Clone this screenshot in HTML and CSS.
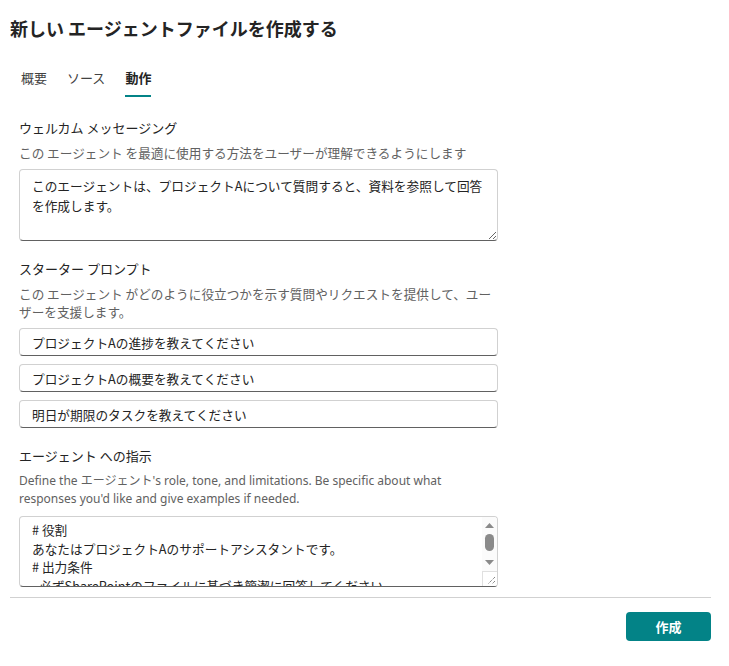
FILE: index.html
```html
<!DOCTYPE html>
<html lang="ja">
<head>
<meta charset="utf-8">
<title>新しい エージェントファイルを作成する</title>
<link rel="stylesheet" href="styles.css">
</head>
<body>
<div class="dialog">
  <h1 class="title">新しい エージェントファイルを作成する</h1>
  <nav class="tabs">
    <span class="tab">概要</span>
    <span class="tab">ソース</span>
    <span class="tab active">動作</span>
  </nav>
  <div class="form">
    <section class="field">
      <div class="label">ウェルカム メッセージング</div>
      <div class="desc">この エージェント を最適に使用する方法をユーザーが理解できるようにします</div>
      <textarea class="textarea welcome">このエージェントは、プロジェクトAについて質問すると、資料を参照して回答を作成します。</textarea>
    </section>
    <section class="field">
      <div class="label">スターター プロンプト</div>
      <div class="desc">この エージェント がどのように役立つかを示す質問やリクエストを提供して、ユーザーを支援します。</div>
      <div class="prompts">
        <input class="input" type="text" value="プロジェクトAの進捗を教えてください">
        <input class="input" type="text" value="プロジェクトAの概要を教えてください">
        <input class="input" type="text" value="明日が期限のタスクを教えてください">
      </div>
    </section>
    <section class="field">
      <div class="label">エージェント への指示</div>
      <div class="desc latin">Define the エージェント's role, tone, and limitations. Be specific about what responses you'd like and give examples if needed.</div>
      <div class="scrollbox">
        <div class="scroll-content">
          <div># 役割</div>
          <div>あなたはプロジェクトAのサポートアシスタントです。</div>
          <div># 出力条件</div>
          <div>- 必ずSharePointのファイルに基づき簡潔に回答してください</div>
        </div>
        <div class="scrollbar">
          <svg class="arrow" width="15" height="12" viewBox="0 0 15 12"><path d="M3 9 L7.5 4 L12 9 Z" fill="#8a8a8a"/></svg>
          <div class="thumb"></div>
          <div class="track"></div>
          <svg class="arrow" width="15" height="12" viewBox="0 0 15 12"><path d="M3 3 L7.5 8 L12 3 Z" fill="#8a8a8a"/></svg>
          <div class="grip">
            <svg width="15" height="15" viewBox="0 0 15 15"><path d="M12 5 L5 12 M12 9 L9 12" stroke="#555" stroke-width="1" stroke-dasharray="1 1"/></svg>
          </div>
        </div>
      </div>
    </section>
  </div>
  <div class="footer">
    <button class="primary">作成</button>
  </div>
</div>
</body>
</html>
```
FILE: styles.css
```css
* { box-sizing: border-box; }
html, body { margin: 0; padding: 0; background: #ffffff; }
body {
  font-family: "Noto Sans", "Noto Sans CJK JP", sans-serif;
  color: #242424;
  font-size: 13px;
}
.dialog {
  padding: 16px 18px 0 10px;
}
.title {
  margin: 0;
  font-size: 18px;
  line-height: 24px;
  font-weight: 700;
  color: #242424;
  font-family: "Noto Sans CJK JP", sans-serif;
}
.tabs {
  display: flex;
  margin-top: 28px;
  padding-left: 1px;
}
.tab {
  padding: 0 10px 7px;
  line-height: 20px;
  font-size: 13px;
  color: #424242;
  font-family: "Noto Sans CJK JP", sans-serif;
  border-bottom: 2px solid transparent;
}
.tab.active {
  font-weight: 700;
  color: #242424;
  position: relative;
}
.tab.active::after {
  content: "";
  position: absolute;
  left: 10px;
  right: 10px;
  bottom: -2px;
  height: 2px;
  background: #038387;
}
.form {
  padding-left: 9px;
  width: 489px;
}
.field {
  display: flex;
  flex-direction: column;
  margin-top: 18px;
}
.field:first-child { margin-top: 21px; }
.label {
  line-height: 20px;
  font-size: 13px;
  color: #242424;
  font-family: "Noto Sans CJK JP", sans-serif;
}
.desc {
  margin-top: 6px;
  line-height: 18px;
  font-size: 12.65px;
  color: #616161;
  font-family: "Noto Sans CJK JP", sans-serif;
}
.desc.latin {
  font-family: "Noto Sans", "Noto Sans CJK JP", sans-serif;
  font-size: 12px;
}
.textarea, .input, .scrollbox {
  font-family: "Noto Sans CJK JP", sans-serif;
  font-size: 12.7px;
  color: #242424;
  border: 1px solid #d1d1d1;
  border-bottom-color: #616161;
  border-radius: 4px;
  background: #fff;
  width: 479px;
  outline: none;
}
.textarea {
  margin-top: 7px;
  height: 72px;
  padding: 6px 12px;
  line-height: 20px;
  resize: vertical;
  overflow: hidden;
}
.prompts {
  display: flex;
  flex-direction: column;
  gap: 8px;
  margin-top: 7px;
}
.input {
  height: 28px;
  padding: 0 12px;
  line-height: 26px;
}
.scrollbox {
  margin-top: 8px;
  height: 71px;
  display: flex;
  overflow: hidden;
}
.scroll-content {
  flex: 1;
  padding: 4px 0 0 12px;
  line-height: 18.5px;
  overflow: hidden;
  white-space: nowrap;
}
.scrollbar {
  width: 15px;
  display: flex;
  flex-direction: column;
  align-items: center;
  background: #fbfbfb;
}
.arrow { display: block; flex: none; margin-top: 2px; }
.thumb {
  width: 9px;
  height: 17px;
  border-radius: 5px;
  background: #8a8a8a;
  margin-top: 3px;
  flex: none;
}
.track { flex: 1; }
.grip {
  width: 15px;
  height: 15px;
  border-top: 1px solid #e0e0e0;
  border-left: 1px solid #e0e0e0;
  background: #fff;
  flex: none;
  margin-top: 2px;
}
.grip svg { display: block; }
.footer {
  margin-top: 10px;
  border-top: 1px solid #d1d1d1;
  padding-top: 14px;
  display: flex;
  justify-content: flex-end;
}
.primary {
  width: 85px;
  height: 29px;
  border: none;
  border-radius: 4px;
  background: #038387;
  color: #fff;
  font-weight: 700;
  font-size: 13px;
  font-family: "Noto Sans CJK JP", sans-serif;
}
```
